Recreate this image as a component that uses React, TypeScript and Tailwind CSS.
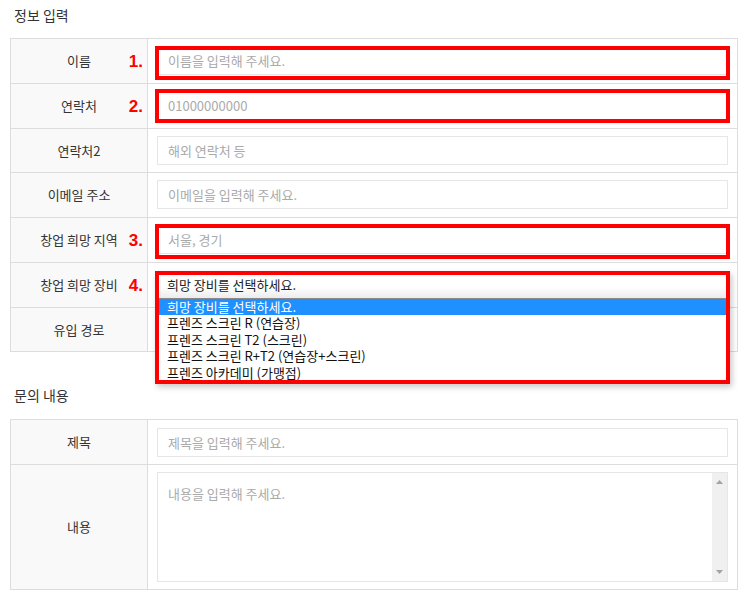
import React from "react";

const font = { fontFamily: '"Noto Sans CJK KR", "Noto Sans", sans-serif' };

function RedFrame({ className }: { className: string }) {
  return (
    <div
      className={`pointer-events-none absolute border-4 border-[#ff0000] ${className}`}
    />
  );
}

function Num({ n }: { n: string }) {
  return (
    <span
      className="absolute right-[4px] top-1/2 -translate-y-1/2 text-[17px] font-bold text-[#ff0000] leading-none"
      style={{ fontFamily: '"Liberation Sans", Arial, sans-serif' }}
    >
      {n}
    </span>
  );
}

function Row({
  label,
  h,
  num,
  children,
  last,
  pt = "pt-[7px]",
}: {
  label: string;
  h: string;
  num?: string;
  children?: React.ReactNode;
  last?: boolean;
  pt?: string;
}) {
  return (
    <div className={`flex ${h} ${last ? "" : "border-b border-[#dddddd]"}`}>
      <div className="relative flex w-[137px] shrink-0 items-center justify-center border-r border-[#dddddd] bg-[#f9f9f9] text-[13px] text-[#333]">
        {label}
        {num && <Num n={num} />}
      </div>
      <div className={`relative flex-1 px-[9px] ${pt}`}>{children}</div>
    </div>
  );
}

function Input({ placeholder }: { placeholder: string }) {
  return (
    <div className="flex h-[29px] items-center border border-[#e6e6e6] bg-white pl-[10px] text-[13px] text-[#aaaaaa]">
      {placeholder}
    </div>
  );
}

const options = [
  "희망 장비를 선택하세요.",
  "프렌즈 스크린 R (연습장)",
  "프렌즈 스크린 T2 (스크린)",
  "프렌즈 스크린 R+T2 (연습장+스크린)",
  "프렌즈 아카데미 (가맹점)",
];

export default function App() {
  return (
    <div className="min-h-[600px] w-[750px] bg-white px-[10px]" style={font}>
      <div className="h-[25px] pl-[4px] pt-[5px] text-[14px] leading-[20px] text-[#333]">
        정보 입력
      </div>
      <div className="mt-[13px] w-[728px] border border-[#dddddd]">
        <Row label="이름" h="h-[45px]" num="1.">
          <Input placeholder="이름을 입력해 주세요." />
          <RedFrame className="left-[7px] top-[7px] h-[34px] w-[575px]" />
        </Row>
        <Row label="연락처" h="h-[45px]" num="2.">
          <Input placeholder="01000000000" />
          <RedFrame className="left-[7px] top-[5px] h-[34px] w-[575px]" />
        </Row>
        <Row label="연락처2" h="h-[44px]">
          <Input placeholder="해외 연락처 등" />
        </Row>
        <Row label="이메일 주소" h="h-[45px]">
          <Input placeholder="이메일을 입력해 주세요." />
        </Row>
        <Row label="창업 희망 지역" h="h-[45px]" num="3.">
          <Input placeholder="서울, 경기" />
          <RedFrame className="left-[7px] top-[6px] h-[35px] w-[575px]" />
        </Row>
        <Row label="창업 희망 장비" h="h-[45px]" num="4.">
          <div className="absolute left-[9px] top-[8px] z-10 w-[571px]">
            <div className="flex h-[28px] items-center border-b border-[#8a8a8a] bg-gradient-to-b from-white from-60% to-[#ececec] pl-[10px] text-[13px] text-[#222]">
              희망 장비를 선택하세요.
            </div>
            <div className="bg-white">
              {options.map((o, i) => (
                <div
                  key={o}
                  className={`h-[16.4px] whitespace-nowrap pl-[10px] text-[13px] leading-[15px] ${
                    i === 0 ? "bg-[#1e90ff] text-white" : "text-[#111]"
                  }`}
                >
                  {o}
                </div>
              ))}
            </div>
          </div>
          <RedFrame className="left-[7px] top-[8px] z-20 h-[113px] w-[575px] shadow-[2px_3px_6px_rgba(0,0,0,0.22)]" />
        </Row>
        <Row label="유입 경로" h="h-[43px]" last>
          <div className="h-[29px] border border-[#e6e6e6] bg-white" />
        </Row>
      </div>

      <div className="mt-[33px] h-[20px] pl-[4px] text-[14px] leading-[20px] text-[#333]">
        문의 내용
      </div>
      <div className="mt-[14px] w-[728px] border border-[#dddddd]">
        <Row label="제목" h="h-[45px]" pt="pt-[8px]">
          <Input placeholder="제목을 입력해 주세요." />
        </Row>
        <Row label="내용" h="h-[124px]" last>
          <div className="flex h-[110px] border border-[#e6e6e6] bg-white">
            <div className="flex-1 pl-[10px] pt-[12px] text-[13px] leading-[18px] text-[#aaaaaa]">
              내용을 입력해 주세요.
            </div>
            <div className="flex w-[15px] flex-col items-center justify-between bg-[#f0f0f0] py-[7px]">
              <svg width="7" height="4" viewBox="0 0 7 4">
                <path d="M0 4 L3.5 0 L7 4 Z" fill="#a3a3a3" />
              </svg>
              <svg width="7" height="4" viewBox="0 0 7 4">
                <path d="M0 0 L3.5 4 L7 0 Z" fill="#a3a3a3" />
              </svg>
            </div>
          </div>
        </Row>
      </div>
    </div>
  );
}
